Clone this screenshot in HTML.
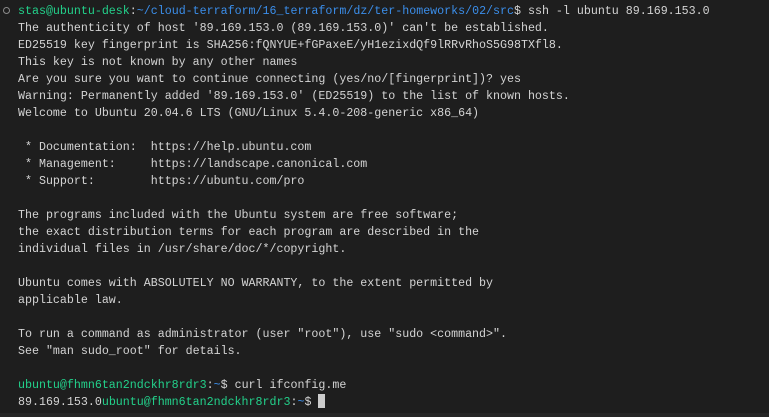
<!DOCTYPE html>
<html><head><meta charset="utf-8"><style>
html,body{margin:0;padding:0;width:769px;height:417px;overflow:hidden;background:#1e1e1e;}
pre{margin:0;position:absolute;left:18px;top:3px;font-family:"Liberation Mono",monospace;font-size:11.65px;line-height:17px;color:#d4d4d4;white-space:pre;}
.g{color:#23d18b}.b{color:#3b8eea}
.cur{display:inline-block;width:7px;height:14px;background:#cccccc;vertical-align:-3px;}
.dot{position:absolute;left:3px;top:7px;width:5px;height:5px;border:1.5px solid #8a8a8a;border-radius:50%;}
.bar{position:absolute;left:0;top:413px;width:769px;height:4px;background:#262626;}
</style></head><body>
<div class="dot"></div>
<pre><span class="g">stas@ubuntu-desk</span>:<span class="b">~/cloud-terraform/16_terraform/dz/ter-homeworks/02/src</span>$ ssh -l ubuntu 89.169.153.0
The authenticity of host '89.169.153.0 (89.169.153.0)' can't be established.
ED25519 key fingerprint is SHA256:fQNYUE+fGPaxeE/yH1ezixdQf9lRRvRhoS5G98TXfl8.
This key is not known by any other names
Are you sure you want to continue connecting (yes/no/[fingerprint])? yes
Warning: Permanently added '89.169.153.0' (ED25519) to the list of known hosts.
Welcome to Ubuntu 20.04.6 LTS (GNU/Linux 5.4.0-208-generic x86_64)

 * Documentation:  https://help.ubuntu.com
 * Management:     https://landscape.canonical.com
 * Support:        https://ubuntu.com/pro

The programs included with the Ubuntu system are free software;
the exact distribution terms for each program are described in the
individual files in /usr/share/doc/*/copyright.

Ubuntu comes with ABSOLUTELY NO WARRANTY, to the extent permitted by
applicable law.

To run a command as administrator (user "root"), use "sudo &lt;command&gt;".
See "man sudo_root" for details.

<span class="g">ubuntu@fhmn6tan2ndckhr8rdr3</span>:<span class="b">~</span>$ curl ifconfig.me
89.169.153.0<span class="g">ubuntu@fhmn6tan2ndckhr8rdr3</span>:<span class="b">~</span>$ <span class="cur"></span></pre>
<div class="bar"></div>
</body></html>
